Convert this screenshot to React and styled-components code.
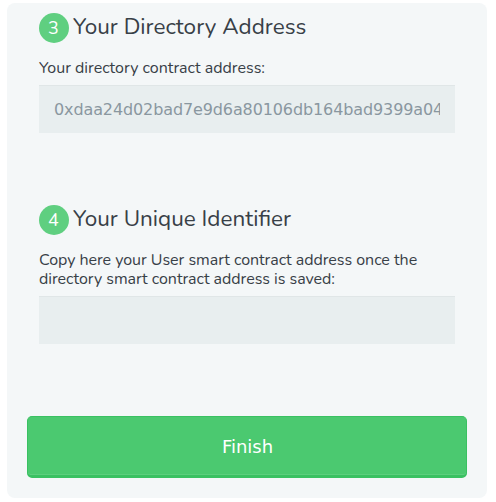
import React from "react";
import styled, { createGlobalStyle } from "styled-components";

const Global = createGlobalStyle`
  * { box-sizing: border-box; }
  body { margin: 0; background: #fff; }
`;

const Page = styled.div`
  width: 496px;
  height: 502px;
  padding: 3px 9px 4px 7px;
  overflow: hidden;
  font-family: "Nunito", "Open Sans", "Noto Sans", sans-serif;
  color: #384047;
`;

const Card = styled.main`
  height: 495px;
  padding: 10px 20px 0;
  border-radius: 8px;
  background: #f4f7f8;
`;

const Step = styled.section`
  height: ${(p) => p.$height}px;
  padding: 0 12px;
`;

const Heading = styled.h2`
  display: flex;
  align-items: center;
  gap: 4px;
  height: 30px;
  margin: 0;
  font-size: 22.5px;
  font-weight: 400;
  line-height: 28px;
  white-space: nowrap;
`;

const Title = styled.span`
  height: 30px;
`;

const Badge = styled.span`
  flex: none;
  width: 30px;
  height: 30px;
  padding-right: 1px;
  border-radius: 50%;
  background: #5fcf80;
  color: #fff;
  font-size: 18px;
  line-height: 30px;
  text-align: center;
`;

const Label = styled.label`
  display: block;
  margin: 16px 0 7px;
  font-size: 16px;
  line-height: 19px;
  letter-spacing: ${(p) => p.$tracking || "normal"};
  white-space: nowrap;
`;

const Field = styled.input`
  display: block;
  width: 416px;
  height: 48px;
  padding: 0 15px;
  border: 0;
  border-radius: 0;
  outline: 0;
  background: #e8eeef;
  box-shadow: 0 1px 0 rgba(0, 0, 0, 0.03) inset;
  color: #8a97a0;
  font: 16px "DejaVu Sans", sans-serif;
  letter-spacing: -0.113px;
`;

const Button = styled.button`
  display: block;
  width: 440px;
  height: 62px;
  padding: 0 0 0 1px;
  border: 1px solid #3ac162;
  border-width: 1px 1px 3px;
  border-radius: 5px;
  background: #4bc970;
  box-shadow: 0 -1px 0 rgba(255, 255, 255, 0.1) inset;
  color: #fff;
  font: 18px "DejaVu Sans", sans-serif;
`;

export default function App() {
  return (
    <Page>
      <Global />
      <Card>
        <Step $height={192}>
          <Heading>
            <Badge>3</Badge>
            <Title>Your Directory Address</Title>
          </Heading>
          <Label>Your directory contract address:</Label>
          <Field defaultValue="0xdaa24d02bad7e9d6a80106db164bad9399a04" />
        </Step>
        <Step $height={211}>
          <Heading>
            <Badge>4</Badge>
            <Title>Your Unique Identifier</Title>
          </Heading>
          <Label $tracking="-0.035px">
            Copy here your User smart contract address once the
            <br />
            directory smart contract address is saved:
          </Label>
          <Field />
        </Step>
        <Button>Finish</Button>
      </Card>
    </Page>
  );
}
